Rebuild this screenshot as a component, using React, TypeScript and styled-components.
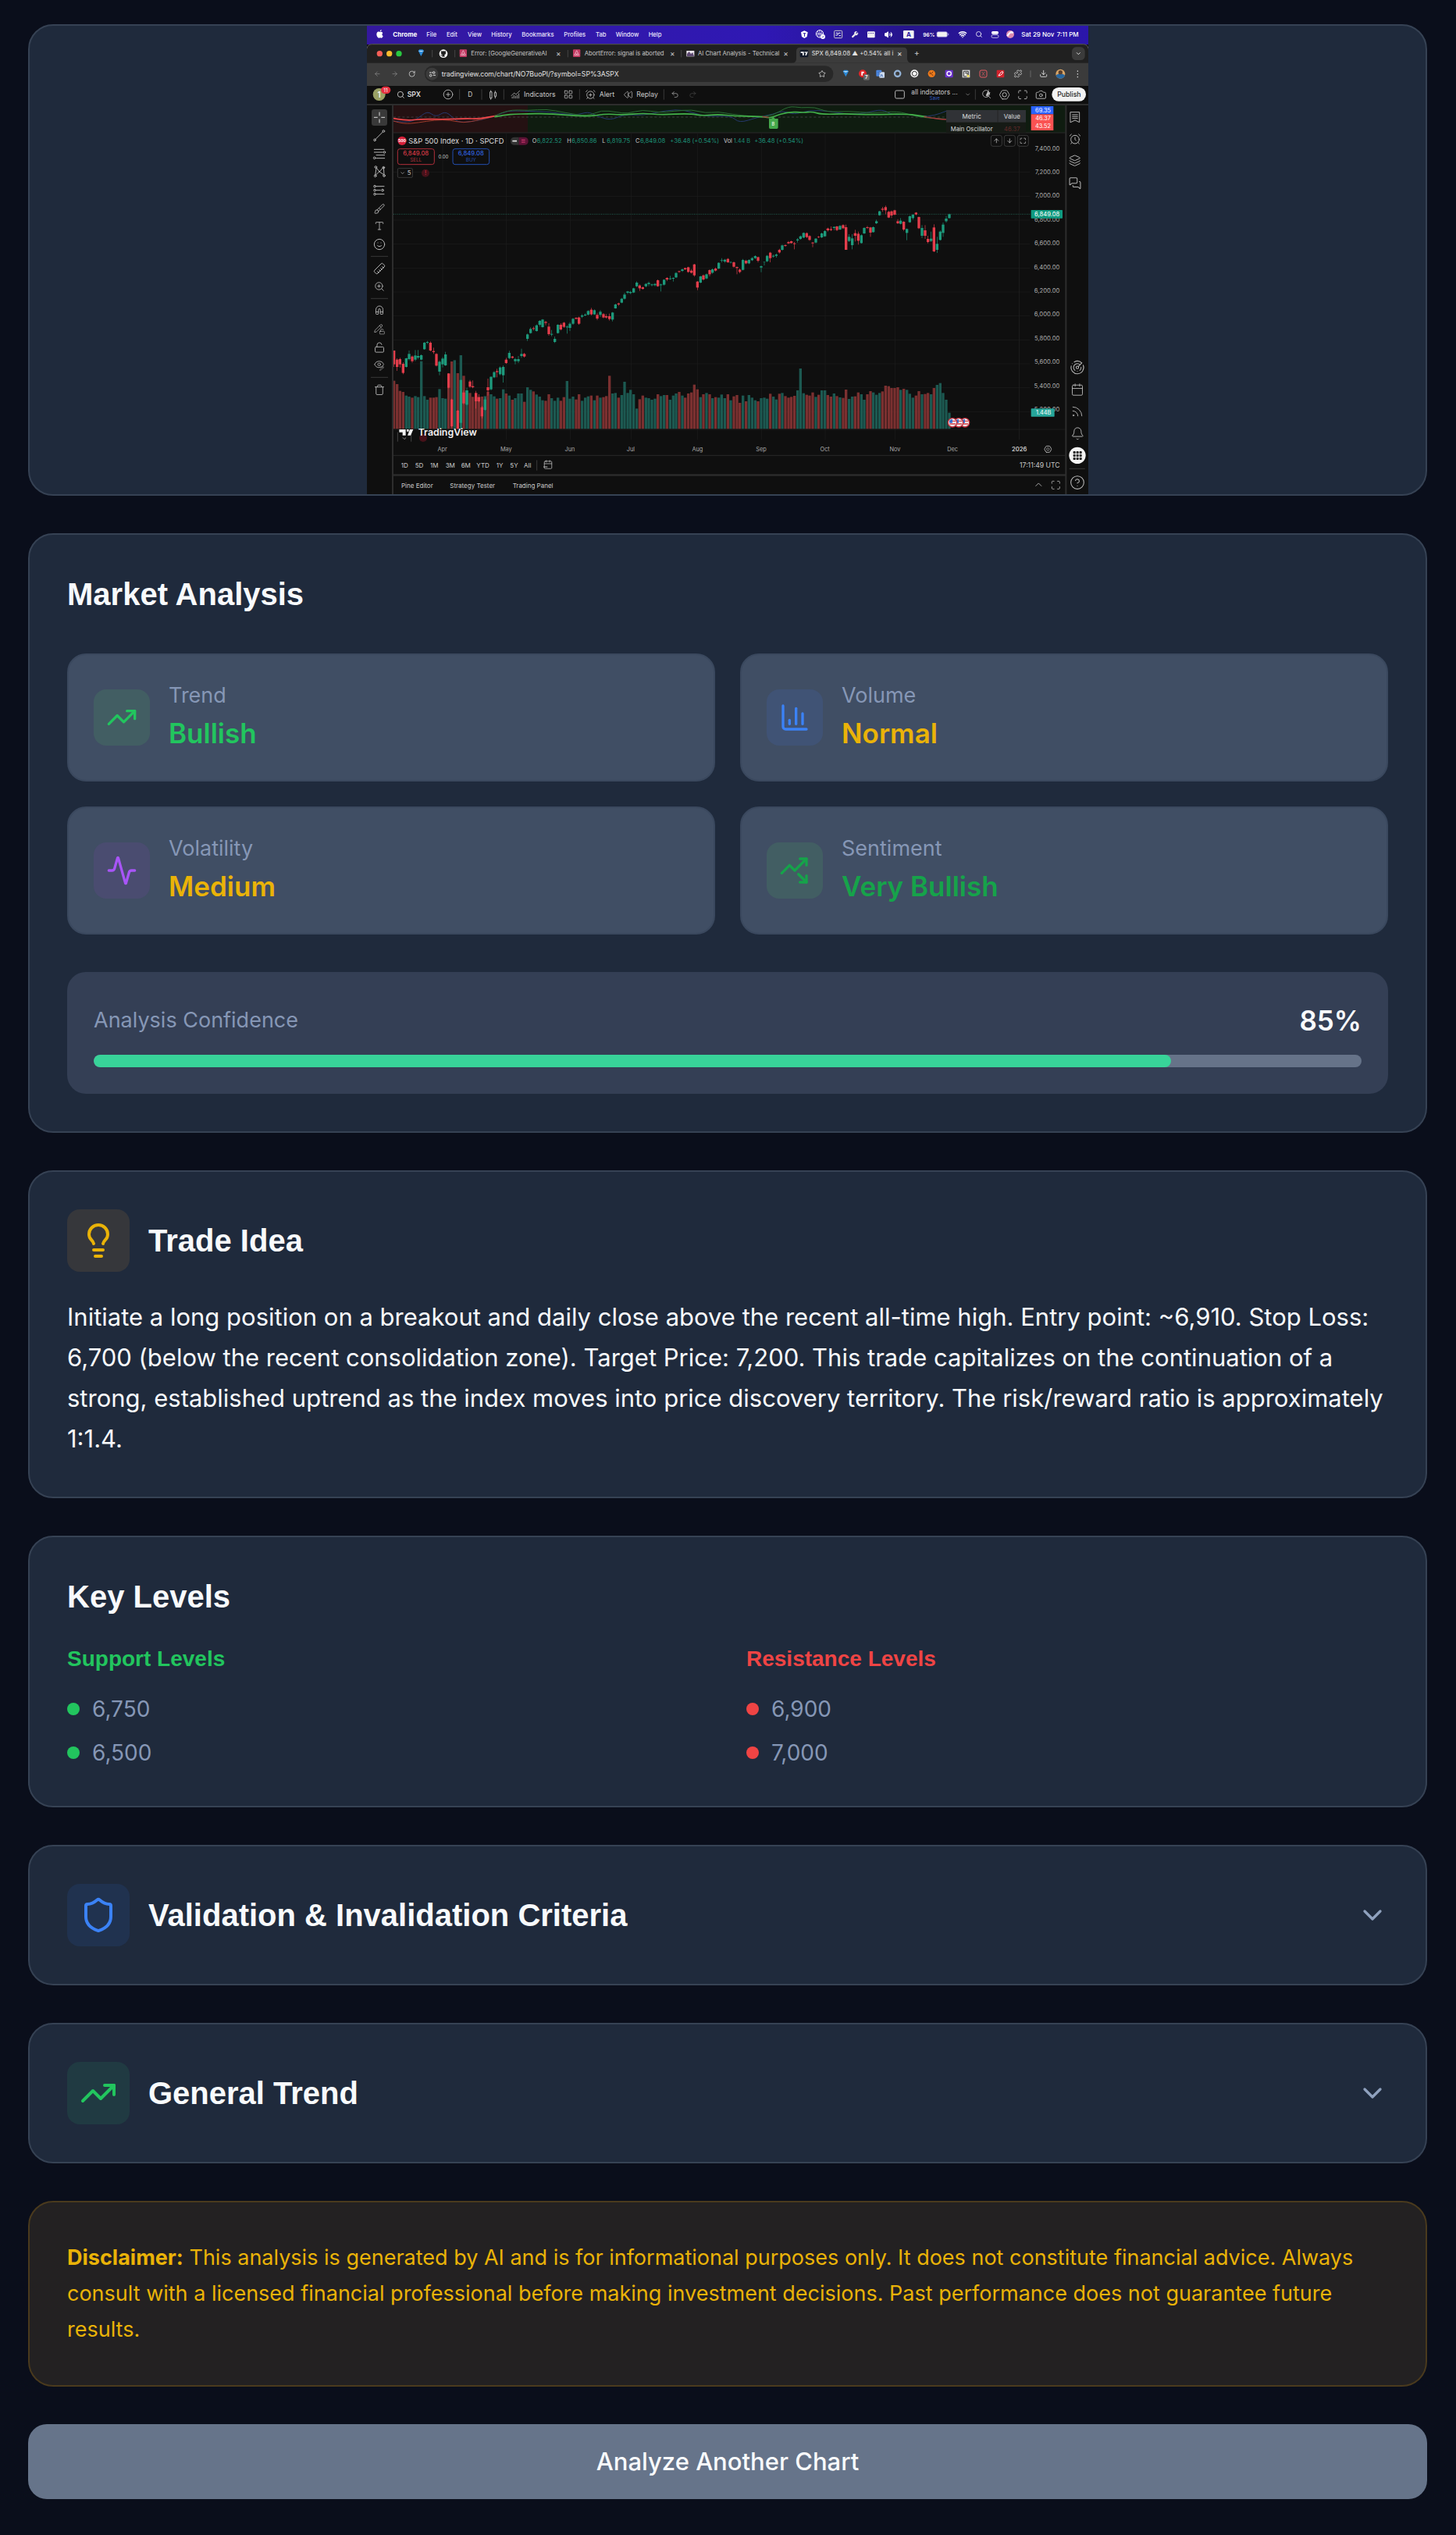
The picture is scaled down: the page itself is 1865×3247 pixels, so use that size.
import { useState } from "react";
import type { ReactNode } from "react";
import styled, { createGlobalStyle } from "styled-components";
import {
  Activity,
  AlarmClock,
  AlarmClockPlus,
  ArrowDown,
  ArrowLeft,
  ArrowRight,
  ArrowUp,
  Bell,
  Brush,
  Calendar,
  Camera,
  ChartColumn,
  ChartNoAxesCombined,
  ChevronDown,
  ChevronUp,
  CircleHelp,
  CirclePlus,
  Download,
  Eye,
  Github,
  Hexagon,
  Languages,
  Layers,
  LayoutGrid,
  Lightbulb,
  LockOpen,
  Magnet,
  Maximize,
  MessagesSquare,
  Pencil,
  Puzzle,
  Radar,
  Redo2,
  Rewind,
  RotateCw,
  Rss,
  Ruler,
  Search,
  Shield,
  Smile,
  Star,
  Trash,
  TrendingUp,
  TrendingUpDown,
  Type,
  Undo2,
  Volume2,
  Wifi,
  Wrench,
  ZoomIn,
} from "lucide-react";

const UI_FONT = `Inter, "Liberation Sans", Arial, sans-serif`;
const HEADING_FONT = `"Liberation Sans", Arial, sans-serif`;

const color = {
  page: "#0a0e1b",
  card: "#1f2a3c",
  line: "#364254",
  tile: "#404e64",
  tileLine: "#3a485e",
  inset: "#343f55",
  track: "#667389",
  white: "#f8fafc",
  muted: "#8697b6",
  green: "#22c55e",
  deepGreen: "#16a34a",
  mint: "#38d399",
  amber: "#eab308",
  blue: "#3b82f6",
  purple: "#a855f7",
  red: "#ef4444",
};

const GlobalStyle = createGlobalStyle`
  * { box-sizing: border-box; }
  body {
    margin: 0;
    background: ${color.page};
    color: ${color.white};
    font-family: ${UI_FONT};
  }
`;

const Page = styled.main`
  display: flex;
  flex-direction: column;
  gap: 48px;
  padding: 31px 37px 46px 36px;
`;

const Card = styled.section`
  background: ${color.card};
  border: 2px solid ${color.line};
  border-radius: 32px;
  padding: 48px;
`;

const PictureCard = styled(Card)`
  display: flex;
  justify-content: center;
  padding: 0;
  overflow: hidden;
`;

const Picture = styled.svg`
  display: block;
  height: 600px;
  max-width: 100%;
  font-family: ${UI_FONT};
`;

const Title = styled.h2`
  margin: 0;
  font-family: ${HEADING_FONT};
  font-size: 40px;
  font-weight: 700;
  line-height: 56px;
`;

const StatGrid = styled.div`
  display: grid;
  grid-template-columns: repeat(2, 1fr);
  gap: 32px;
  margin: 48px 0;
`;

const StatTile = styled.div`
  display: flex;
  align-items: center;
  gap: 24px;
  padding: 32px;
  background: ${color.tile};
  border: 2px solid ${color.tileLine};
  border-radius: 24px;
`;

const IconBadge = styled.span<{ $bg: string }>`
  display: flex;
  flex: none;
  padding: 16px;
  border-radius: 16px;
  background: ${(p) => p.$bg};
`;

const StatLabel = styled.div`
  font-size: 27px;
  line-height: 40px;
  color: ${color.muted};
`;

const StatValue = styled.div<{ $color: string }>`
  font-size: 35px;
  font-weight: 600;
  line-height: 56px;
  color: ${(p) => p.$color};
`;

const Confidence = styled.div`
  padding: 34px;
  border-radius: 24px;
  background: ${color.inset};
`;

const ConfidenceHead = styled.div`
  display: flex;
  align-items: center;
  justify-content: space-between;
  margin-bottom: 16px;
`;

const Track = styled.div`
  height: 16px;
  border-radius: 8px;
  background: ${color.track};
  overflow: hidden;
`;

const Fill = styled.div`
  height: 100%;
  border-radius: 8px;
  background: ${color.mint};
`;

const TitleRow = styled.div`
  display: flex;
  align-items: center;
  gap: 24px;
`;

const Paragraph = styled.p`
  margin: 32px 0 0;
  font-size: 31px;
  line-height: 52px;
`;

const LevelGrid = styled.div`
  display: grid;
  grid-template-columns: repeat(2, 1fr);
  gap: 48px;
  margin-top: 32px;
`;

const LevelTitle = styled.h3<{ $color: string }>`
  margin: 0 0 24px;
  font-family: ${HEADING_FONT};
  font-size: 28px;
  font-weight: 700;
  line-height: 40px;
  color: ${(p) => p.$color};
`;

const LevelList = styled.ul`
  display: flex;
  flex-direction: column;
  gap: 16px;
  margin: 0;
  padding: 0;
  list-style: none;
`;

const LevelItem = styled.li`
  display: flex;
  align-items: center;
  gap: 16px;
  font-size: 28px;
  line-height: 40px;
  color: ${color.muted};
`;

const Dot = styled.span<{ $color: string }>`
  width: 16px;
  height: 16px;
  border-radius: 50%;
  background: ${(p) => p.$color};
`;

const Disclosure = styled.button`
  display: flex;
  align-items: center;
  justify-content: space-between;
  width: 100%;
  padding: 48px;
  border: 2px solid ${color.line};
  border-radius: 32px;
  background: ${color.card};
  color: inherit;
  text-align: left;
  cursor: pointer;
`;

const Chevron = styled(ChevronDown)<{ $open: boolean }>`
  color: #8fa1be;
  transform: ${(p) => (p.$open ? "rotate(180deg)" : "none")};
`;

const Disclaimer = styled.aside`
  padding: 48px;
  border: 2px solid #4a3a1d;
  border-radius: 32px;
  background: #232122;
  font-size: 27px;
  line-height: 46px;
  color: ${color.amber};
`;

const Again = styled.button`
  padding: 24px;
  border: 0;
  border-radius: 24px;
  background: #66748a;
  color: ${color.white};
  font-family: inherit;
  font-size: 31px;
  font-weight: 500;
  line-height: 48px;
  cursor: pointer;
`;

/* One trading day per entry: direction, body top, body bottom, high, low, top of its volume bar. */
const DAYS = `
r 627 680 627 690 743;r 662 690 657 705 756;r 660 680 655 692 782;r 678 713 672 718 786;g 657 690 655 692 800;g 640 660 627 665 804;
r 650 668 646 674 808;g 646 662 625 668 802;g 648 654 625 660 806;g 645 662 642 664 668;g 597 622 594 624 802;g 594 597 590 602 816;
r 597 627 592 630 808;r 629 633 616 640 808;r 640 685 637 688 806;g 670 708 665 722 775;g 658 680 652 692 810;g 642 684 632 686 812;
r 716 770 714 772 714;r 815 918 812 922 669;g 664 664 664 664 664;r 858 928 855 928 714;g 740 905 740 928 645;r 788 830 780 835 724;
g 780 835 770 838 780;r 746 766 740 770 790;r 764 768 742 772 805;r 790 822 782 850 800;r 806 822 795 826 806;r 845 880 840 888 804;
g 815 855 806 858 802;r 768 780 735 800 785;g 728 776 726 780 795;g 710 730 706 733 803;r 706 710 697 730 812;g 692 718 688 722 810;
g 690 722 684 750 776;r 662 675 655 678 792;g 636 656 628 660 800;r 650 655 648 658 816;g 660 668 655 680 810;g 660 668 648 675 792;
g 640 648 620 655 792;r 640 650 636 654 824;g 565 582 562 590 768;g 544 560 538 562 778;r 541 544 535 550 784;g 530 552 527 554 796;
g 513 528 510 535 804;g 508 537 506 539 818;r 517 521 513 530 820;r 535 564 522 570 795;g 563 566 548 572 810;g 582 594 573 598 820;
g 528 560 526 562 808;r 528 546 522 550 820;r 520 536 517 540 806;g 535 538 530 562 744;g 524 540 518 552 812;g 505 524 502 528 804;
r 501 505 499 508 815;r 500 524 497 528 795;g 492 497 487 502 820;g 489 492 484 495 808;g 475 489 472 492 803;r 470 488 463 492 800;
g 472 488 469 490 818;r 490 504 482 510 800;g 478 490 472 498 808;r 487 500 483 503 806;r 495 500 487 504 802;r 495 506 485 512 724;
g 481 508 479 515 792;g 450 465 447 466 790;r 446 450 443 455 808;g 428 443 425 445 798;g 412 428 405 431 747;g 400 405 398 410 790;
g 402 406 398 410 778;g 388 404 386 406 795;g 366 380 361 383 850;r 377 388 373 398 814;r 384 390 381 393 800;g 371 380 368 384 808;
g 367 372 362 380 810;g 373 376 370 380 816;g 371 376 368 380 812;r 357 380 354 382 795;g 373 376 370 400 802;g 355 374 353 377 798;
r 348 354 345 360 798;g 350 353 340 355 816;g 348 351 346 362 800;g 329 346 326 348 792;r 322 325 320 328 786;g 315 321 312 325 800;
r 310 315 308 318 808;r 307 325 305 328 792;r 320 328 314 331 788;r 296 338 294 343 758;r 362 385 360 395 776;g 342 366 340 368 806;
r 338 354 335 358 795;g 334 350 331 353 790;r 318 334 315 342 795;g 315 328 312 332 810;r 312 320 308 323 806;g 290 312 288 314 808;
g 279 281 272 288 796;g 278 285 275 290 810;r 275 288 272 290 795;g 287 289 284 292 818;r 288 305 285 308 803;r 306 310 304 334 798;
r 316 325 312 330 828;g 279 317 275 319 800;r 282 292 278 295 822;g 279 292 276 295 798;g 272 280 268 283 808;g 264 272 261 275 818;
r 268 282 266 288 822;g 303 308 300 326 810;g 286 287 285 300 808;g 263 284 260 287 812;r 251 272 248 288 793;g 263 266 258 270 804;
g 258 263 254 270 815;r 240 250 236 254 793;g 223 240 220 243 790;r 222 225 219 228 802;r 210 215 206 218 808;r 207 214 205 216 805;
r 215 218 210 238 801;g 200 204 195 212 780;g 188 198 185 201 696;g 175 193 173 195 791;r 176 191 173 195 797;r 187 202 184 205 800;
r 212 215 210 230 788;g 197 212 195 215 805;r 190 192 187 195 797;g 177 192 174 195 780;g 168 188 165 190 780;r 158 165 155 170 798;
r 160 164 150 168 804;g 152 156 150 165 792;r 150 164 148 168 802;g 148 162 145 164 807;r 145 157 142 160 809;r 153 240 143 240 777;
g 190 206 180 210 813;g 196 222 180 238 804;r 176 186 163 208 803;r 178 205 170 220 788;g 184 214 181 216 795;g 156 177 153 179 816;
r 153 156 148 160 795;r 154 174 152 190 783;g 153 172 150 174 788;g 130 138 124 141 797;g 92 107 90 109 790;r 82 86 75 94 784;
r 76 88 70 103 762;r 94 116 90 118 764;r 92 108 89 118 771;r 88 105 86 107 771;r 130 138 122 141 768;g 128 140 118 142 778;
r 132 162 130 167 774;g 160 175 158 203 778;g 111 134 108 136 793;g 105 118 102 124 808;r 97 104 95 107 800;r 114 157 112 160 783;
g 156 186 145 195 795;r 165 186 145 198 794;r 198 210 186 215 790;g 197 206 170 210 795;r 154 246 142 249 771;g 217 240 190 252 759;
g 170 202 166 204 752;g 143 175 135 190 790;g 120 130 110 135 816;g 103 118 101 120 866`
  .split(";")
  .map((entry, i) => {
    const [dir, ...n] = entry.trim().split(" ");
    const [top, bottom, high, low, volume] = n.map((v) => Number(v) + 621);
    return { x: Math.round(104 + i * 11.66), up: dir === "g", top, bottom, high, low, volume };
  });

const VOLUME_BASE = 1549;

/* Rounds the corners of an "x,y x,y ..." line by curving through segment midpoints. */
function wave(points: string) {
  const p = points.split(" ").map((pair) => pair.split(",").map(Number));
  let d = `M${p[0][0]} ${p[0][1]}`;
  for (let i = 1; i < p.length - 1; i++) {
    d += `Q${p[i][0]} ${p[i][1]} ${(p[i][0] + p[i + 1][0]) / 2} ${(p[i][1] + p[i + 1][1]) / 2}`;
  }
  const last = p[p.length - 1];
  return `${d}L${last[0]} ${last[1]}`;
}

type LabelProps = { x: number; y: number; size?: number; fill?: string; weight?: number; anchor?: "start" | "middle" | "end"; children: ReactNode };

function Label({ x, y, size = 24, fill = "#c9c9c9", weight = 400, anchor = "start", children }: LabelProps) {
  return (
    <text x={x} y={y} fontSize={size} fill={fill} fontWeight={weight} textAnchor={anchor}>
      {children}
    </text>
  );
}

function MenuBar() {
  const items: [string, number][] = [["File", 229], ["Edit", 306], ["View", 387], ["History", 478], ["Bookmarks", 595], ["Profiles", 757], ["Tab", 879], ["Window", 956], ["Help", 1082]];
  return (
    <g>
      <rect width="2772" height="72" fill="url(#menubar)" />
      <path d="M49 24c-7-4-12 2-12 9 0 8 5 14 9 14 2 0 3-1 5-1s3 1 5 1c3 0 5-4 6-7-5-3-5-9-1-12-3-5-8-5-12-4zm1-2c0-4 3-7 6-7 0 4-3 7-6 7z" fill="#fff" />
      <Label x={100} y={42} weight={700} fill="#fff">Chrome</Label>
      {items.map(([t, x]) => <Label key={t} x={x} y={42} weight={500} fill="#e9e4fb" size={23}>{t}</Label>)}
      <path d="M1668 25l13-6 13 6-3 17-10 6-10-6z" fill="#fff" />
      <path d="M1676 28h11v3h-4v10h-3V31h-4z" fill="#2a15a0" />
      <circle cx="1740" cy="31" r="14" fill="none" stroke="#fff" strokeWidth="3" />
      <path d="M1726 31h28M1740 17v28M1731 20q8 11 0 22M1749 20q-8 11 0 22" fill="none" stroke="#fff" strokeWidth="2" />
      <circle cx="1752" cy="42" r="9" fill="#fff" />
      <path d="M1748 42l3 3 5-6" fill="none" stroke="#2a15a0" strokeWidth="2" />
      <rect x="1796" y="19" width="30" height="28" rx="3" fill="none" stroke="#ccc" strokeWidth="3" />
      <path d="M1801 36h7l4-8h8M1802 28h7M1814 38h7" fill="none" stroke="#fff" strokeWidth="3" />
      <Wrench x={1862} y={20} size={27} color="#eee" fill="#eee" />
      <rect x="1923" y="22" width="29" height="24" rx="3" fill="#f2f2f2" />
      <path d="M1927 29h4M1935 29h4M1943 29h4" stroke="#2a15a0" strokeWidth="3" />
      <Volume2 x={1988} y={18} size={32} color="#fff" fill="#fff" />
      <rect x="2061" y="18" width="41" height="31" rx="4" fill="#f2f2f2" />
      <Label x={2082} y={42} anchor="middle" weight={700} fill="#2a15a0">A</Label>
      <Label x={2137} y={41} size={20} weight={600} fill="#fff">96%</Label>
      <rect x="2190" y="23" width="40" height="20" rx="5" fill="#f2f2f2" stroke="#8f82d8" strokeWidth="2" />
      <path d="M2234 29v8" stroke="#8f82d8" strokeWidth="4" />
      <Wifi x={2272} y={16} size={34} color="#fff" strokeWidth={3} />
      <Search x={2338} y={19} size={28} color="#fff" />
      <rect x="2400" y="21" width="27" height="11" rx="5" fill="#fff" />
      <rect x="2400" y="35" width="27" height="11" rx="5" fill="none" stroke="#fff" strokeWidth="2" />
      <circle cx="2472" cy="33" r="15" fill="#dd8ab0" />
      <path d="M2461 40q11-22 22-12" stroke="#f8f2ff" strokeWidth="7" fill="none" />
      <Label x={2515} y={41} weight={500} fill="#fff" size={24}>Sat 29 Nov</Label>
      <Label x={2651} y={41} weight={500} fill="#fff" size={24}>7:11 PM</Label>
    </g>
  );
}

function ErrorMark({ x }: { x: number }) {
  return (
    <g>
      <rect x={x} y="91" width="28" height="29" rx="3" fill="#c33b63" />
      <path d={`M${x + 14} 95l9 18h-18zM${x + 9} 105l9 8M${x + 19} 105l-9 8`} fill="none" stroke="#f6cfdb" strokeWidth="2" />
    </g>
  );
}

function BrowserChrome() {
  return (
    <g>
      <path d="M0 230V90q0-20 20-20h2732q20 0 20 20v140z" fill="#202020" />
      <path d="M0 88q2-17 20-17h2732q18 0 20 17" fill="none" stroke="#555" strokeWidth="3" />
      <circle cx="49" cy="107" r="11" fill="#f65f57" />
      <circle cx="86" cy="107" r="11" fill="#fbbb2e" />
      <circle cx="123" cy="107" r="11" fill="#29c840" />
      <path d="M197 96l5-5h12l5 5-11 21z" fill="#2b8ad8" />
      <path d="M197 96h22l-11 4z" fill="#d8efff" />
      <path d="M251 93v28M338 93v28M772 93v28M1208 93v28" stroke="#444" strokeWidth="3" />
      <circle cx="294" cy="107" r="16" fill="#fff" />
      <Github x={281} y={95} size={26} color="#202020" fill="#202020" />
      <ErrorMark x={356} />
      <Label x={400} y={115} size={23}>Error: [GoogleGenerativeAI</Label>
      <Label x={726} y={117} size={30}>×</Label>
      <ErrorMark x={792} />
      <Label x={836} y={115} size={23}>AbortError: signal is aborted</Label>
      <Label x={1164} y={117} size={30}>×</Label>
      <rect x="1228" y="96" width="30" height="22" fill="#e8e3ea" />
      <path d="M1230 108l8-9 7 9 7-5 5 14h-27z" fill="#5c4870" />
      <Label x={1272} y={115} size={23}>AI Chart Analysis - Technical</Label>
      <Label x={1600} y={117} size={30}>×</Label>
      <path d="M1636 143q14-2 14-18V98q0-15 15-15h396q15 0 15 15v27q0 16 16 18z" fill="#3b3b3b" />
      <rect x="1664" y="92" width="32" height="29" rx="5" fill="#111a2b" />
      <path d="M1667 100h12v14h-5v-9h-7zM1682 100h4v4h-4zM1688 100h6l-5 14h-5z" fill="#fff" />
      <Label x={1709} y={115} size={23} fill="#e2e2e2">SPX 6,849.08 ▲ +0.54% all i</Label>
      <Label x={2037} y={117} size={30} fill="#e2e2e2">×</Label>
      <Label x={2102} y={117} size={32}>+</Label>
      <rect x="2709" y="82" width="50" height="50" rx="16" fill="#3b3b3b" />
      <ChevronDown x={2722} y={95} size={24} color="#ddd" strokeWidth={3} />

      <rect y="143" width="2772" height="88" fill="#3b3b3b" />
      <ArrowLeft x={26} y={171} size={28} color="#858585" />
      <ArrowRight x={93} y={171} size={28} color="#858585" />
      <RotateCw x={159} y={171} size={28} color="#d5d5d5" />
      <rect x="222" y="154" width="1570" height="62" rx="31" fill="#282828" />
      <circle cx="250" cy="185" r="24" fill="#3b3b3b" />
      <path d="M240 180h10M254 190h10" stroke="#ddd" strokeWidth="3" />
      <circle cx="257" cy="180" r="4" fill="none" stroke="#ddd" strokeWidth="3" />
      <circle cx="245" cy="191" r="4" fill="none" stroke="#ddd" strokeWidth="3" />
      <Label x={287} y={194} size={26} fill="#e2e2e2">tradingview.com/chart/NO7BuoPl/?symbol=SP%3ASPX</Label>
      <Star x={1734} y={170} size={30} color="#ccc" />
      <path d="M1829 175l5-5h12l5 5-11 21z" fill="#2b8ad8" />
      <path d="M1829 175h22l-11 4z" fill="#d8efff" />
      <circle cx="1905" cy="184" r="15" fill="#e02427" />
      <path d="M1900 176h10v6h-5v9h-5z" fill="#fff" />
      <rect x="1908" y="187" width="23" height="22" rx="4" fill="#676767" />
      <Label x={1919} y={205} size={18} anchor="middle" weight={600} fill="#fff">7</Label>
      <rect x="1957" y="170" width="21" height="24" rx="3" fill="#4a86e0" />
      <rect x="1969" y="178" width="20" height="22" rx="3" fill="#cfdcf0" />
      <Languages x={1961} y={174} size={24} color="#3f6db4" />
      <circle cx="2039" cy="184" r="11" fill="none" stroke="#93b2d6" strokeWidth="7" />
      <circle cx="2104" cy="184" r="15" fill="#fff" />
      <circle cx="2104" cy="184" r="9" fill="none" stroke="#222" strokeWidth="3" />
      <circle cx="2170" cy="184" r="14" fill="#ef7b1b" />
      <path d="M2176 176l-8 8 8 8M2164 178v8" fill="none" stroke="#6b3410" strokeWidth="3" />
      <rect x="2222" y="170" width="30" height="29" rx="3" fill="#6b31cf" />
      <circle cx="2237" cy="184" r="8" fill="none" stroke="#fff" strokeWidth="4" />
      <rect x="2288" y="170" width="29" height="29" fill="#e3e3e3" />
      <path d="M2293 175h18v14M2293 175v20h12M2298 181h9v9" fill="none" stroke="#333" strokeWidth="3" />
      <path d="M2305 186l12 7-8 6z" fill="#ecd842" />
      <rect x="2355" y="171" width="27" height="27" rx="6" fill="none" stroke="#e35b62" strokeWidth="3" />
      <path d="M2363 177l11 15M2374 177l-11 15" stroke="#e35b62" strokeWidth="2" />
      <rect x="2420" y="170" width="29" height="29" rx="3" fill="#d1222c" />
      <path d="M2427 192l5-8 8-8 4 1-1 6-8 7z" fill="none" stroke="#fff" strokeWidth="3" />
      <Puzzle x={2486} y={168} size={32} color="#ccc" />
      <path d="M2550 172v26" stroke="#666" strokeWidth="3" />
      <Download x={2584} y={168} size={32} color="#ddd" />
      <circle cx="2665" cy="185" r="18" fill="#d9a566" />
      <path d="M2648 190q17-12 34 0-3 13-17 13t-17-13z" fill="#2666a0" />
      <circle cx="2665" cy="179" r="8" fill="#5b402e" />
      <path d="M2731 174v1M2731 185v1M2731 196v1" stroke="#ddd" strokeWidth="4" strokeLinecap="round" />
    </g>
  );
}

function ChartToolbar() {
  return (
    <g>
      <circle cx="47" cy="264" r="24" fill="#9aa164" />
      <Label x={47} y={275} size={30} anchor="middle" fill="#fff" weight={500}>1</Label>
      <rect x="54" y="233" width="37" height="28" rx="14" fill="#e5303f" />
      <Label x={72} y={255} size={20} anchor="middle" fill="#fff">11</Label>
      <Search x={114} y={249} size={32} color="#ccc" />
      <Label x={155} y={273} size={26} weight={600} fill="#ddd">SPX</Label>
      <CirclePlus x={291} y={243} size={42} color="#bbb" strokeWidth={1.5} />
      <path d="M356 244v40M441 244v40M526 244v40M817 244v40M1141 244v40M2338 244v40" stroke="#3a3a3a" strokeWidth="3" />
      <Label x={388} y={273} size={25}>D</Label>
      <path d="M473 254h7v24h-7zM476 248v6M476 278v6M490 257h7v14h-7zM493 250v7M493 271v8" fill="none" stroke="#bbb" strokeWidth="3" />
      <ChartNoAxesCombined x={552} y={245} size={38} color="#bbb" strokeWidth={1.5} />
      <Label x={603} y={274} size={26}>Indicators</Label>
      <LayoutGrid x={755} y={245} size={38} color="#bbb" strokeWidth={1.5} />
      <AlarmClockPlus x={838} y={243} size={42} color="#bbb" strokeWidth={1.5} />
      <Label x={893} y={274} size={26}>Alert</Label>
      <Rewind x={986} y={247} size={36} color="#bbb" strokeWidth={1.5} />
      <Label x={1036} y={274} size={26}>Replay</Label>
      <Undo2 x={1168} y={248} size={32} color="#bbb" strokeWidth={1.5} />
      <Redo2 x={1236} y={248} size={32} color="#4a4a4a" strokeWidth={1.5} />
      <rect x="2030" y="249" width="35" height="30" rx="5" fill="none" stroke="#bbb" strokeWidth="3" />
      <Label x={2092} y={265} size={25}>all indicators ...</Label>
      <Label x={2182} y={285} size={17} anchor="middle" fill="#2f5ec4">Save</Label>
      <ChevronDown x={2297} y={252} size={24} color="#999" />
      <Search x={2361} y={243} size={40} color="#bbb" strokeWidth={1.5} />
      <path d="M2378 268l12-26-2 14h8l-12 16z" fill="#bbb" />
      <g transform="rotate(90 2450 265)"><Hexagon x={2428} y={243} size={44} color="#bbb" strokeWidth={1.5} /></g>
      <circle cx="2450" cy="265" r="8" fill="none" stroke="#bbb" strokeWidth="3" />
      <Maximize x={2499} y={244} size={42} color="#bbb" strokeWidth={1.5} />
      <Camera x={2568} y={243} size={44} color="#bbb" strokeWidth={1.5} />
      <rect x="2632" y="237" width="131" height="53" rx="26" fill="#f2f2f2" />
      <Label x={2698} y={273} size={26} anchor="middle" fill="#222" weight={500}>Publish</Label>
    </g>
  );
}

function SideTools() {
  return (
    <g color="#b5b5b5" strokeLinecap="round">
      <rect x="18" y="321" width="60" height="63" rx="9" fill="#393939" />
      <path d="M48 333v12M48 360v12M28 352h12M56 352h12" stroke="#ddd" strokeWidth="3" />
      <g fill="none" stroke="#b5b5b5" strokeWidth="3">
        <path d="M32 437l28-28" />
        <circle cx="30" cy="439" r="4" /><circle cx="64" cy="405" r="4" />
        <path d="M28 475h38M28 486h32M36 497h32M36 509h32" />
        <circle cx="67" cy="486" r="4" /><circle cx="29" cy="508" r="4" />
        <path d="M32 575l4-30 12 16 16-18 2 30-18-12z" />
        <circle cx="32" cy="577" r="4" /><circle cx="34" cy="543" r="4" /><circle cx="64" cy="545" r="4" /><circle cx="66" cy="576" r="4" />
        <path d="M36 617h30M36 632h16M36 647h30" />
        <circle cx="30" cy="617" r="4" /><circle cx="30" cy="632" r="4" /><circle cx="60" cy="632" r="4" /><circle cx="30" cy="647" r="4" />
      </g>
      <Brush x={26} y={682} size={44} strokeWidth={1.5} />
      <Type x={27} y={748} size={42} strokeWidth={1.5} />
      <Smile x={24} y={816} size={48} strokeWidth={1.5} />
      <path d="M16 886h64M16 1048h64M16 1351h64" stroke="#383838" strokeWidth="3" />
      <g transform="rotate(90 48 933)"><Ruler x={24} y={909} size={48} strokeWidth={1.5} /></g>
      <ZoomIn x={27} y={981} size={42} strokeWidth={1.5} />
      <g transform="rotate(-45 48 1096)"><Magnet x={27} y={1075} size={42} strokeWidth={1.5} /></g>
      <Pencil x={26} y={1145} size={36} strokeWidth={1.5} />
      <LockOpen x={46} y={1163} size={24} strokeWidth={2} />
      <LockOpen x={26} y={1214} size={44} strokeWidth={1.5} />
      <Eye x={26} y={1280} size={42} strokeWidth={1.5} />
      <Pencil x={48} y={1308} size={18} />
      <Trash x={26} y={1377} size={44} strokeWidth={1.5} />

      <path d="M2704 332h34v39l-17-8-17 8zM2711 342h20M2711 349h20M2711 356h20" fill="none" stroke="#b5b5b5" strokeWidth="3" />
      <AlarmClock x={2697} y={411} size={48} strokeWidth={1.5} />
      <Layers x={2696} y={494} size={48} strokeWidth={1.5} />
      <MessagesSquare x={2696} y={580} size={50} strokeWidth={1.5} />
      <Radar x={2701} y={1284} size={58} strokeWidth={1.3} />
      <Calendar x={2704} y={1372} size={52} strokeWidth={1.3} />
      <Rss x={2704} y={1456} size={52} strokeWidth={1.3} />
      <Bell x={2704} y={1540} size={54} strokeWidth={1.3} />
      <circle cx="2730" cy="1651" r="32" fill="#f4f4f4" />
      {[2714, 2726, 2738].map((x) => [1635, 1647, 1659].map((y) => <rect key={`${x}-${y}`} x={x} y={y} width="9" height="9" rx="2" fill="#111" />))}
      <path d="M2700 1702h58" stroke="#383838" strokeWidth="3" />
      <CircleHelp x={2700} y={1725} size={60} strokeWidth={1.3} />
    </g>
  );
}

function Oscillator() {
  return (
    <g fill="none">
      <rect x="102" y="306" width="516" height="105" fill="#241112" />
      <rect x="618" y="306" width="2065" height="105" fill="#0f1c10" />
      <path d="M102 351H2496" stroke="#3c3c3c" strokeWidth="3" strokeDasharray="9 8" />
      <path d={wave("102,366 150,372 190,362 232,326 265,352 300,328 330,352 355,374 440,362 500,345 540,326 600,328 700,330 800,345 850,330 880,345 935,364 990,340 1060,345 1150,325 1220,322 1300,350 1400,345 1430,374 1500,352 1560,340 1600,326 1640,342 1700,324 1780,328 1850,342 1920,335 1980,320 2020,344 2080,338 2130,350 2180,345 2226,328")} stroke="#26396f" strokeWidth="3" />
      <path d={wave("102,366 140,378 200,372 260,362 320,362 370,374 430,362 500,346")} stroke="#a33c2c" strokeWidth="3" />
      <path d={wave("102,356 150,365 210,358 300,360 380,356 430,358 500,345")} stroke="#f0474b" strokeWidth="5" />
      <path d={wave("490,347 540,322 620,326 690,320 760,334 850,348 900,324 960,332 1000,338 1060,322 1120,334 1180,328 1250,322 1300,336 1350,330 1400,340 1500,350 1560,346 1620,308 1670,316 1720,312 1770,332 1850,328 1940,336 2040,328 2100,346 2150,354 2220,358")} stroke="#2b6d35" strokeWidth="3" />
      <path d={wave("490,350 530,343 570,339 615,339 680,337 750,342 850,349 920,338 980,343 1060,336 1130,342 1240,337 1290,346 1350,340 1410,347 1510,348 1545,354 1560,350 1620,330 1680,334 1710,330 1750,341 1840,338 1940,342 2070,338 2150,350")} stroke="#43b14a" strokeWidth="5" />
      <path d="M2140 349q30 5 50 8t40 3M1520 349l24 3" stroke="#a43a3e" strokeWidth="4" />
      <path d="M102 411H2683" stroke="#2b2b2b" strokeWidth="3" />
      <path d="M1545 357h9l7-8 7 8h12v34q0 5-5 5h-25q-5 0-5-5z" fill="#45a84b" />
      <Label x={1561} y={385} size={17} anchor="middle" fill="#fff">B</Label>
      <rect x="2226" y="324" width="306" height="87" fill="#161a15" />
      <rect x="2226" y="324" width="306" height="47" fill="#303236" />
      <path d="M2424 324v47" stroke="#242424" strokeWidth="3" />
      <Label x={2324} y={358} anchor="middle" fill="#ddd">Metric</Label>
      <Label x={2479} y={358} anchor="middle" fill="#ddd">Value</Label>
      <Label x={2324} y={406} anchor="middle" fill="#ddd" size={23}>Main Oscillator</Label>
      <Label x={2479} y={406} anchor="middle" fill="#5e2929" size={23}>46.37</Label>
      <rect x="2552" y="309" width="86" height="31" fill="#2962ff" />
      <rect x="2552" y="340" width="86" height="62" fill="#fa5252" />
      <Label x={2598} y={332} size={22} anchor="middle" fill="#fff">69.35</Label>
      <Label x={2598} y={363} size={22} anchor="middle" fill="#fff">46.37</Label>
      <Label x={2598} y={394} size={22} anchor="middle" fill="#fff">43.52</Label>
    </g>
  );
}

function Legend() {
  const quotes: [string, string, number][] = [["O", "6,822.52", 635], ["H", "6,850.86", 769], ["L", "6,819.75", 904], ["C", "6,849.08", 1032]];
  return (
    <g>
      <circle cx="135" cy="442" r="17" fill="#d6203a" />
      <Label x={135} y={448} size={15} weight={700} anchor="middle" fill="#fff">500</Label>
      <Label x={160} y={452} size={28} fill="#ddd">S&amp;P 500 Index · 1D · SPCFD</Label>
      <path d="M568 428h16v30h-16q-16 0-16-15t16-15z" fill="#333" />
      <path d="M584 428h20q16 0 16 15t-16 15h-20z" fill="#5c1336" />
      <path d="M559 443h17" stroke="#ddd" strokeWidth="5" />
      <path d="M594 439h14M594 447h14" stroke="#e33c78" strokeWidth="3" />
      {quotes.map(([k, v, x]) => (
        <g key={k}>
          <Label x={x} y={451} size={22}>{k}</Label>
          <Label x={x + 18} y={451} size={23} fill="#1c8f76">{v}</Label>
        </g>
      ))}
      <Label x={1165} y={451} size={23} fill="#1c8f76">+36.48 (+0.54%)</Label>
      <Label x={1371} y={451} size={22}>Vol</Label>
      <Label x={1409} y={451} size={22} fill="#1c8f76">1.44 B</Label>
      <Label x={1489} y={451} size={23} fill="#1c8f76">+36.48 (+0.54%)</Label>
      <g fill="#0f0f0f" strokeWidth="3">
        <rect x="118" y="473" width="141" height="60" rx="9" stroke="#b02f3b" />
        <rect x="330" y="473" width="140" height="60" rx="9" stroke="#244fb0" />
        <rect x="118" y="548" width="57" height="35" rx="4" stroke="#383838" />
      </g>
      <Label x={188} y={498} size={23} weight={500} anchor="middle" fill="#d93a46">6,849.08</Label>
      <Label x={188} y={522} size={19} anchor="middle" fill="#a83039">SELL</Label>
      <Label x={294} y={510} size={18} anchor="middle">0.00</Label>
      <Label x={400} y={498} size={23} weight={500} anchor="middle" fill="#2f63e0">6,849.08</Label>
      <Label x={400} y={522} size={19} anchor="middle" fill="#234ca8">BUY</Label>
      <ChevronDown x={126} y={555} size={22} color="#ccc" />
      <Label x={155} y={574} size={23}>5</Label>
      <circle cx="225" cy="566" r="15" fill="#46121a" />
      <Label x={225} y={574} size={22} anchor="middle" fill="#d12d40">!</Label>
      <g fill="none" stroke="#3a3a3a" strokeWidth="3">
        <rect x="2398" y="421" width="42" height="42" rx="8" />
        <rect x="2449" y="421" width="42" height="42" rx="8" />
        <rect x="2500" y="421" width="42" height="42" rx="8" />
      </g>
      <ArrowUp x={2406} y={429} size={26} color="#ccc" />
      <ArrowDown x={2457} y={429} size={26} color="#ccc" />
      <Maximize x={2508} y={429} size={26} color="#ccc" />
    </g>
  );
}

function PriceChart() {
  const prices = ["7,400.00", "7,200.00", "7,000.00", "6,800.00", "6,600.00", "6,400.00", "6,200.00", "6,000.00", "5,800.00", "5,600.00", "5,400.00", "5,200.00"];
  const months: [string, number][] = [["Apr", 290], ["May", 535], ["Jun", 780], ["Jul", 1014], ["Aug", 1270], ["Sep", 1515], ["Oct", 1760], ["Nov", 2029], ["Dec", 2250]];
  return (
    <g>
      {prices.slice(1).map((p, i) => <rect key={p} x="102" y={562 + i * 92} width="2446" height="2" fill="#1c1c1c" />)}
      {months.slice(0, 8).map(([m, x]) => <rect key={m} x={x} y="411" width="2" height="1180" fill="#1c1c1c" />)}
      <rect x="2506" y="411" width="2" height="1180" fill="#222" />
      <path d="M102 724H2550" stroke="#226052" strokeWidth="3" strokeDasharray="3 4" />
      {DAYS.map((d, i) => (
        <rect key={i} x={d.x - 5} y={d.volume} width="10" height={VOLUME_BASE - d.volume} fill={d.up ? "#1c5951" : "#7b3030"} />
      ))}
      {DAYS.map((d, i) => (
        <g key={i} fill={d.up ? "#1d9a7c" : "#e33d4b"}>
          <rect x={d.x - 1} y={d.high} width="2" height={d.low - d.high} />
          <rect x={d.x - 5} y={d.top} width="10" height={d.bottom - d.top} />
        </g>
      ))}
      <path d="M102 1551H2683" stroke="#222" strokeWidth="2" />
      {prices.map((p, i) => <Label key={p} x={2662} y={479 + Math.round(i * 91.2)} size={23} anchor="end" fill="#a8a8a8">{p}</Label>)}
      <rect x="2552" y="708" width="121" height="32" rx="2" fill="#0f9a80" />
      <Label x={2662} y={732} size={23} anchor="end" fill="#fff">6,849.08</Label>
      <rect x="2552" y="1471" width="90" height="31" rx="2" fill="#26a69a" />
      <Label x={2600} y={1494} size={22} anchor="middle" fill="#fff">1.44B</Label>
      {[2298, 2274, 2250].map((x) => (
        <g key={x}>
          <circle cx={x} cy="1525" r="17" fill="#eee" stroke="#c32c3b" strokeWidth="4" />
          <path d={`M${x} 1519h13M${x - 11} 1530h23`} stroke="#d8414a" strokeWidth="4" />
          <path d={`M${x - 12} 1526v-8q4-6 12-6v14z`} fill="#3b6fd0" />
        </g>
      ))}
      <path d="M118 1562v36M170 1562v36" stroke="#444" strokeWidth="3" />
      <circle cx="216" cy="1584" r="15" fill="#46121a" />
      <path d="M124 1551h25v23h-12v-12h-13zM153 1551h8v8h-8zM165 1551h13l-10 23h-12z" fill="#f2f2f2" />
      <ChevronDown x={133} y={1575} size={22} color="#ddd" />
      <Label x={197} y={1575} size={37} weight={600} fill="#f2f2f2">TradingView</Label>
      <rect x="190" y="1540" width="230" height="9" fill="none" />
      {months.map(([m, x]) => <Label key={m} x={x} y={1635} size={22} anchor="middle" fill="#a8a8a8">{m}</Label>)}
      <Label x={2507} y={1635} size={23} weight={600} anchor="middle">2026</Label>
      <g transform="rotate(90 2617 1627)"><Hexagon x={2601} y={1611} size={32} color="#bbb" /></g>
      <circle cx="2617" cy="1627" r="5" fill="none" stroke="#bbb" strokeWidth="2" />
      <path d="M102 1651H2683" stroke="#2a2a2a" strokeWidth="3" />
    </g>
  );
}

function BottomBars() {
  const ranges: [string, number][] = [["1D", 131], ["5D", 185], ["1M", 243], ["3M", 302], ["6M", 362], ["YTD", 421], ["1Y", 497], ["5Y", 550], ["All", 603]];
  const panels: [string, number][] = [["Pine Editor", 132], ["Strategy Tester", 319], ["Trading Panel", 560]];
  return (
    <g>
      {ranges.map(([t, x]) => <Label key={t} x={x} y={1698} size={24}>{t}</Label>)}
      <path d="M653 1669v40" stroke="#3a3a3a" strokeWidth="3" />
      <Calendar x={677} y={1667} size={38} color="#bbb" strokeWidth={1.5} />
      <path d="M678 1695h16" stroke="#bbb" strokeWidth="3" />
      <Label x={2663} y={1698} size={26} anchor="end">17:11:49 UTC</Label>
      <rect x="102" y="1723" width="2583" height="7" fill="#2d2d2d" />
      {panels.map(([t, x]) => <Label key={t} x={x} y={1775} size={24}>{t}</Label>)}
      <ChevronUp x={2560} y={1742} size={42} color="#bbb" strokeWidth={1.5} />
      <Maximize x={2627} y={1745} size={40} color="#bbb" strokeWidth={1.5} />
    </g>
  );
}

function ChartPicture() {
  return (
    <Picture viewBox="0 0 2772 1800" role="img" aria-label="Uploaded S&P 500 chart">
      <defs>
        <linearGradient id="menubar">
          <stop offset="0" stopColor="#34189f" />
          <stop offset="0.55" stopColor="#2f18b4" />
          <stop offset="0.75" stopColor="#26148c" />
          <stop offset="1" stopColor="#2b16ab" />
        </linearGradient>
      </defs>
      <rect width="2772" height="1800" fill="#0f0f0f" />
      <MenuBar />
      <BrowserChrome />
      <ChartToolbar />
      <Oscillator />
      <PriceChart />
      <Legend />
      <rect y="300" width="2772" height="6" fill="#2d2d2d" />
      <rect x="96" y="300" width="6" height="1500" fill="#2d2d2d" />
      <rect x="2683" y="300" width="6" height="1500" fill="#2d2d2d" />
      <SideTools />
      <BottomBars />
    </Picture>
  );
}

const STATS = [
  { label: "Trend", value: "Bullish", tone: color.green, icon: <TrendingUp size={40} color={color.green} />, bg: "#425e63" },
  { label: "Volume", value: "Normal", tone: color.amber, icon: <ChartColumn size={40} color={color.blue} />, bg: "#405375" },
  { label: "Volatility", value: "Medium", tone: color.amber, icon: <Activity size={40} color={color.purple} />, bg: "#4a4c70" },
  { label: "Sentiment", value: "Very Bullish", tone: color.deepGreen, icon: <TrendingUpDown size={40} color={color.deepGreen} />, bg: "#425e63" },
];

const LEVELS = [
  { title: "Support Levels", tone: color.green, values: ["6,750", "6,500"] },
  { title: "Resistance Levels", tone: color.red, values: ["6,900", "7,000"] },
];

function DisclosureCard({ title, icon, bg }: { title: string; icon: ReactNode; bg: string }) {
  const [open, setOpen] = useState(false);
  return (
    <Disclosure type="button" aria-expanded={open} onClick={() => setOpen(!open)}>
      <TitleRow>
        <IconBadge $bg={bg}>{icon}</IconBadge>
        <Title as="span">{title}</Title>
      </TitleRow>
      <Chevron size={40} $open={open} />
    </Disclosure>
  );
}

export default function App() {
  const confidence = 85;
  return (
    <>
      <GlobalStyle />
      <Page>
        <PictureCard>
          <ChartPicture />
        </PictureCard>

        <Card>
          <Title>Market Analysis</Title>
          <StatGrid>
            {STATS.map((s) => (
              <StatTile key={s.label}>
                <IconBadge $bg={s.bg}>{s.icon}</IconBadge>
                <div>
                  <StatLabel>{s.label}</StatLabel>
                  <StatValue $color={s.tone}>{s.value}</StatValue>
                </div>
              </StatTile>
            ))}
          </StatGrid>
          <Confidence>
            <ConfidenceHead>
              <StatLabel id="confidence">Analysis Confidence</StatLabel>
              <StatValue $color={color.white}>{confidence}%</StatValue>
            </ConfidenceHead>
            <Track role="progressbar" aria-labelledby="confidence" aria-valuenow={confidence} aria-valuemin={0} aria-valuemax={100}>
              <Fill style={{ width: `${confidence}%` }} />
            </Track>
          </Confidence>
        </Card>

        <Card>
          <TitleRow>
            <IconBadge $bg="#36373b"><Lightbulb size={48} color={color.amber} /></IconBadge>
            <Title>Trade Idea</Title>
          </TitleRow>
          <Paragraph>
            Initiate a long position on a breakout and daily close above the recent all-time high. Entry point: ~6,910. Stop Loss: 6,700 (below the recent consolidation zone). Target Price: 7,200. This trade capitalizes on the continuation of a strong, established uptrend as the index moves into price discovery territory. The risk/reward ratio is approximately 1:1.4.
          </Paragraph>
        </Card>

        <Card>
          <Title>Key Levels</Title>
          <LevelGrid>
            {LEVELS.map((group) => (
              <div key={group.title}>
                <LevelTitle $color={group.tone}>{group.title}</LevelTitle>
                <LevelList>
                  {group.values.map((v) => (
                    <LevelItem key={v}>
                      <Dot $color={group.tone} />
                      {v}
                    </LevelItem>
                  ))}
                </LevelList>
              </div>
            ))}
          </LevelGrid>
        </Card>

        <DisclosureCard title="Validation & Invalidation Criteria" icon={<Shield size={48} color={color.blue} />} bg="#20324f" />
        <DisclosureCard title="General Trend" icon={<TrendingUp size={48} color={color.green} />} bg="#203a42" />

        <Disclaimer>
          <strong>Disclaimer:</strong> This analysis is generated by AI and is for informational purposes only. It does not constitute financial advice. Always consult with a licensed financial professional before making investment decisions. Past performance does not guarantee future results.
        </Disclaimer>

        <Again type="button">Analyze Another Chart</Again>
      </Page>
    </>
  );
}
